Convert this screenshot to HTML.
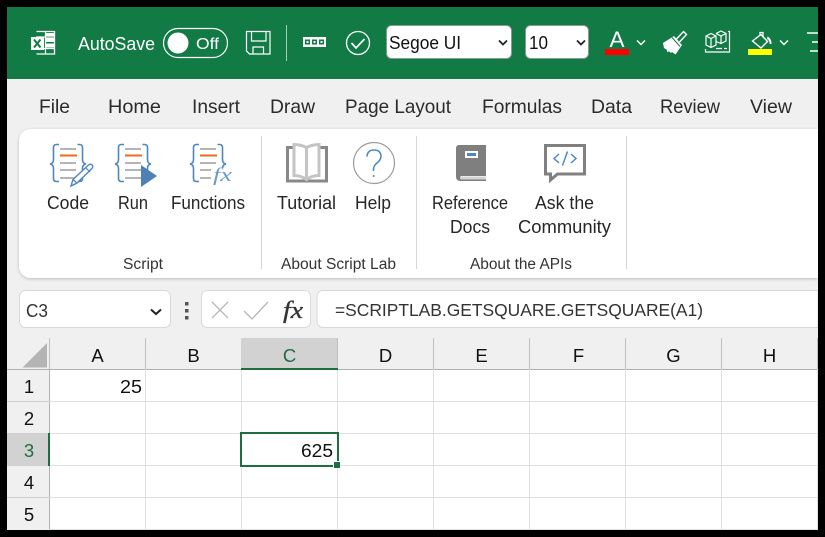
<!DOCTYPE html>
<html><head><meta charset="utf-8"><style>
html,body{margin:0;padding:0;background:#000;width:825px;height:537px;overflow:hidden}
svg{display:block}
text{font-family:"Liberation Sans",sans-serif;fill:#262626;font-size:18px}
.w{fill:#fff}
.tab{font-size:19.500px;fill:#2b2b2b}
.l{font-size:18.500px}
.g{font-size:15.500px;fill:#333}
.c{font-size:18.500px;fill:#111;text-anchor:middle}
.n{font-size:18.500px;fill:#111}
</style></head><body>
<svg width="825" height="537" viewBox="0 0 825 537" xmlns="http://www.w3.org/2000/svg">
<defs>
<filter id="sh" x="-5%" y="-10%" width="110%" height="120%"><feDropShadow dx="0" dy="1" stdDeviation="1.500" flood-color="#000" flood-opacity=".22"/></filter>
<g id="doc">
<path d="M59 144.500h-2.500q-3 0-3 3v12q0 4-3.500 4.500q3.500.5 3.500 4.500v10q0 3 3 3h2.500M77.500 144.500h2q3 0 3 3v12q0 4 3.500 4.500q-3.500.5-3.500 4.500v10q0 3-3 3h-2" fill="none" stroke="#4e86bd" stroke-width="1.600"/>
<path d="M60 149h16M60 163h16M60 170h16M60 178h16" stroke="#b5b5b5" stroke-width="2"/>
<path d="M60 155.500h17" stroke="#ed6a1f" stroke-width="2"/>
</g>
</defs>
<rect x="7" y="7" width="811" height="523" fill="#f0f0f0"/>
<rect x="7" y="7" width="811" height="72" fill="#127a45"/>

<!-- excel logo -->
<path d="M36.500 31.500h18v22.500h-18" fill="none" stroke="#fff" stroke-width="1.300"/>
<path d="M36 37h19M36 48.500h19M45.500 31v23" stroke="#fff" stroke-width="1.200"/>
<rect x="31" y="37" width="13" height="13" fill="#fff"/>
<path d="M34 39.500l6.500 8M40.500 39.500l-6.500 8" stroke="#127a45" stroke-width="2"/>
<path d="M46 38h8v4h-8zM46 43.500h8v4h-8zM46 33h8v3h-8z" fill="#fff"/>

<text x="78" y="50" class="w" style="font-size:18px" textLength="77" lengthAdjust="spacingAndGlyphs">AutoSave</text>
<rect x="163.500" y="28.500" width="64" height="29" rx="14.500" fill="none" stroke="#fff" stroke-width="1.200"/>
<circle cx="178" cy="43" r="10.500" fill="#fff"/>
<text x="196" y="49" class="w" style="font-size:16px" textLength="23" lengthAdjust="spacingAndGlyphs">Off</text>

<!-- save -->
<path d="M246.500 31.500h23.500v22.500h-20.500l-3-3z" fill="none" stroke="#fff" stroke-width="1.200"/>
<path d="M251.500 31.500v9.500h14.500v-9.500M253 54v-7h10.500v7" fill="none" stroke="#fff" stroke-width="1.200"/>
<rect x="286" y="25" width="1" height="36" fill="#a9cdb9"/>
<!-- 000 -->
<rect x="303" y="37" width="23" height="10" fill="#fff"/>
<path d="M305 39.500h5v5h-5zM312 39.500h5v5h-5zM319 39.500h5v5h-5z" fill="#127a45"/>
<path d="M306.500 41h2v2h-2zM313.500 41h2v2h-2zM320.500 41h2v2h-2z" fill="#fff"/>
<!-- check -->
<circle cx="358" cy="43" r="11.500" fill="none" stroke="#fff" stroke-width="1.300"/>
<path d="M351.500 43l4.500 5 8.500-9" fill="none" stroke="#fff" stroke-width="1.700"/>

<!-- selects -->
<rect x="386.500" y="25.500" width="125" height="33" rx="5" fill="#fff" stroke="#8a9a90"/>
<text x="389" y="49" style="font-size:18.500px;fill:#111" textLength="72" lengthAdjust="spacingAndGlyphs">Segoe UI</text>
<path d="M499 40.500l4 4 4-4" fill="none" stroke="#222" stroke-width="1.800"/>
<rect x="525.500" y="25.500" width="63" height="33" rx="5" fill="#fff" stroke="#8a9a90"/>
<text x="529" y="49" style="font-size:18.500px;fill:#111" textLength="19" lengthAdjust="spacingAndGlyphs">10</text>
<path d="M577 40.500l4 4 4-4" fill="none" stroke="#222" stroke-width="1.800"/>

<!-- font colour -->
<text x="609.500" y="47" class="w" style="font-size:22px" textLength="15" lengthAdjust="spacingAndGlyphs">A</text>
<rect x="605" y="49" width="24" height="6" fill="#f00"/>
<path d="M637 40.500l4 4 4-4" fill="none" stroke="#fff" stroke-width="1.400"/>
<!-- brush -->
<path d="M663 43l11-7 8 9-6.500 9.500-3.500-2.500-1 1-2-1.800-1.500 1-1-2.700-2.500-1.500z" fill="#fff"/>
<path d="M672 37.500l8 9" stroke="#127a45" stroke-width="1"/>
<path d="M676.500 39l7-7.500 3 3-7 7.500" fill="none" stroke="#fff" stroke-width="1.400"/>
<!-- cubes -->
<g fill="none" stroke="#fff" stroke-width="1.200">
<path d="M706 36l5-2.500 5 2.500v9l-5 2.500-5-2.500zM706 36l5 2.500 5-2.500M711 38.500v9"/>
<path d="M716 33.500l5-2.500 5 2.500v7.500l-5 2.500-5-2M716 33.500l5 2.500 5-2.500M721 36v7"/>
<path d="M728 31.500h1.500v20.500h-24v-3M716 48.500h6M724 48.500h3" />
</g>
<!-- fill colour -->
<path d="M752.500 41l8.500-6.500 6.500 7-6.500 6.500z" fill="none" stroke="#fff" stroke-width="1.400"/>
<path d="M760 36v-3.500h3v5" fill="none" stroke="#fff" stroke-width="1.300"/>
<path d="M767.500 36.500q4 1.500 4 7.500h-1.800q0-3.500-2.700-5z" fill="#fff"/>
<rect x="748" y="49" width="24" height="6" fill="#ff0"/>
<path d="M780 40.500l4 4 4-4" fill="none" stroke="#fff" stroke-width="1.400"/>
<!-- align -->
<path d="M807 33h11M812 42h6M810 51h8" stroke="#fff" stroke-width="1.400"/>

<!-- tabs -->
<text x="39" y="113" class="tab" textLength="31" lengthAdjust="spacingAndGlyphs">File</text>
<text x="108" y="113" class="tab" textLength="53" lengthAdjust="spacingAndGlyphs">Home</text>
<text x="192" y="113" class="tab" textLength="48" lengthAdjust="spacingAndGlyphs">Insert</text>
<text x="270" y="113" class="tab" textLength="45" lengthAdjust="spacingAndGlyphs">Draw</text>
<text x="345" y="113" class="tab" textLength="106" lengthAdjust="spacingAndGlyphs">Page Layout</text>
<text x="482" y="113" class="tab" textLength="80" lengthAdjust="spacingAndGlyphs">Formulas</text>
<text x="591" y="113" class="tab" textLength="41" lengthAdjust="spacingAndGlyphs">Data</text>
<text x="660" y="113" class="tab" textLength="60" lengthAdjust="spacingAndGlyphs">Review</text>
<text x="750" y="113" class="tab" textLength="42" lengthAdjust="spacingAndGlyphs">View</text>

<!-- ribbon -->
<path d="M818 129H31a12 12 0 0 0-12 12v125a12 12 0 0 0 12 12H818z" fill="#fff" filter="url(#sh)"/>
<path d="M261.500 136v133M416.500 136v133M626.500 136v133" stroke="#d6d6d6" stroke-width="1"/>

<!-- code -->
<use href="#doc"/>
<path d="M71 186l2-6.500 15.500-14.500q2-1.500 3.500 0t0 3.500l-15 14.500z" fill="#fff" stroke="#4e86bd" stroke-width="1.400"/>
<path d="M85.500 167.500l4.500 4.500M73 179.500l4 3.500" stroke="#4e86bd" stroke-width="1.200"/>
<!-- run -->
<use href="#doc" x="65"/>
<path d="M141 165l16 11-16 11z" fill="#4e80b5"/>
<!-- functions -->
<use href="#doc" x="140"/>
<rect x="211" y="168" width="22" height="18" fill="#fff"/>
<text x="213" y="181" style="font-family:'Liberation Serif',serif;font-style:italic;font-size:19px;fill:#6b9bcb" textLength="19" lengthAdjust="spacingAndGlyphs">fx</text>

<text x="47" y="209" class="l" textLength="42" lengthAdjust="spacingAndGlyphs">Code</text>
<text x="118" y="209" class="l" textLength="30" lengthAdjust="spacingAndGlyphs">Run</text>
<text x="171" y="209" class="l" textLength="74" lengthAdjust="spacingAndGlyphs">Functions</text>
<text x="123" y="269" class="g" textLength="40" lengthAdjust="spacingAndGlyphs">Script</text>

<!-- tutorial book -->
<path d="M287.500 147.500h39v33.500h-39z" fill="none" stroke="#888" stroke-width="3"/>
<path d="M306.500 147.500q-6-3-12.500-3v31q7 0 12.500 4q5.500-4 12.500-4v-31q-6.500 0-12.500 3zv32" fill="#fff" stroke="#c4c4c4" stroke-width="3"/>
<!-- help -->
<circle cx="374" cy="163" r="20.500" fill="#fff" stroke="#9a9a9a" stroke-width="1.200"/>
<path d="M367 156.500q.5-6.500 7-6.500t7 6q0 4-4 7t-3.500 8" fill="none" stroke="#4d8ac6" stroke-width="1.600"/>
<circle cx="373.700" cy="176" r="1" fill="#4d8ac6"/>
<text x="277" y="209" class="l" textLength="59" lengthAdjust="spacingAndGlyphs">Tutorial</text>
<text x="355" y="209" class="l" textLength="36" lengthAdjust="spacingAndGlyphs">Help</text>
<text x="281" y="269" class="g" textLength="115" lengthAdjust="spacingAndGlyphs">About Script Lab</text>

<!-- ref book -->
<path d="M456 148a3 3 0 0 1 3-3h27v31h-25a2.500 2.500 0 0 0 0 3.500h25v1.500h-26a4 4 0 0 1-4-4z" fill="#7f7f7f"/>
<rect x="461" y="176.500" width="25" height="3" fill="#d4d4d4"/>
<rect x="465" y="151" width="13" height="7" fill="#fff"/>
<rect x="467" y="153" width="9" height="3" fill="#4e86bd"/>
<!-- ask -->
<path d="M545.500 145.500h39v28.500h-27l-7 6v-6h-5z" fill="#fff" stroke="#808080" stroke-width="3"/>
<path d="M559 154l-5 4.500 5 4.500M571 154l5 4.500-5 4.500M567.500 151.500l-5 14" fill="none" stroke="#4d8ac6" stroke-width="1.500"/>

<text x="432" y="209" class="l" textLength="76" lengthAdjust="spacingAndGlyphs">Reference</text>
<text x="450" y="233" class="l" textLength="40" lengthAdjust="spacingAndGlyphs">Docs</text>
<text x="535" y="209" class="l" textLength="59" lengthAdjust="spacingAndGlyphs">Ask the</text>
<text x="518" y="233" class="l" textLength="93" lengthAdjust="spacingAndGlyphs">Community</text>
<text x="470" y="269" class="g" textLength="102" lengthAdjust="spacingAndGlyphs">About the APIs</text>

<!-- formula bar -->
<rect x="19.500" y="290.500" width="151" height="37" rx="6" fill="#fff" stroke="#d8d8d8"/>
<text x="26" y="317" style="font-size:18px;fill:#333" textLength="22" lengthAdjust="spacingAndGlyphs">C3</text>
<path d="M151 309.500l5 4.500 5-4.500" fill="none" stroke="#222" stroke-width="2"/>
<path d="M185 302h3.500v3.500h-3.500zM185 309h3.500v3.500h-3.500zM185 316h3.500v3.500h-3.500z" fill="#555"/>
<rect x="201.500" y="290.500" width="109" height="37" rx="6" fill="#fff" stroke="#d8d8d8"/>
<path d="M212 302l16 16M228 302l-16 16" stroke="#b8b8b8" stroke-width="1.300"/>
<path d="M244 311l8 8 16-17" fill="none" stroke="#b8b8b8" stroke-width="1.300"/>
<text x="283" y="318" style="font-family:'Liberation Serif',serif;font-style:italic;font-size:24px;fill:#333;stroke:#333;stroke-width:.35px" textLength="20" lengthAdjust="spacingAndGlyphs">fx</text>
<path d="M818 290.500H323a6 6 0 0 0-6 6v25a6 6 0 0 0 6 6H818z" fill="#fff" stroke="#d8d8d8"/>
<text x="335" y="316" style="font-size:17.300px;fill:#333" textLength="368" lengthAdjust="spacingAndGlyphs">=SCRIPTLAB.GETSQUARE.GETSQUARE(A1)</text>

<!-- grid -->
<rect x="49" y="369" width="769" height="161" fill="#fff"/>
<rect x="241" y="338" width="96" height="31" fill="#d2d2d2"/>
<rect x="7" y="433" width="42" height="33" fill="#d2d2d2"/>
<path d="M47 343v24.500H22.500z" fill="#b4b4b4"/>
<path d="M49.500 338v31M145.500 338v31M433.500 338v31M529.500 338v31M625.500 338v31M721.500 338v31M817.500 338v31M337.500 338v31" stroke="#c0c0c0"/>
<path d="M7 369.500h811" stroke="#b0b0b0"/>
<path d="M49.500 369v161" stroke="#b0b0b0"/>
<path d="M145.500 369v161M241.500 369v161M337.500 369v161M433.500 369v161M529.500 369v161M625.500 369v161M721.500 369v161M817.500 369v161" stroke="#e0e0e0"/>
<path d="M49 401.500h769M49 433.500h769M49 465.500h769M49 497.500h769M49 529.500h769" stroke="#e0e0e0"/>
<path d="M7 401.500h42M7 433.500h42M7 465.500h42M7 497.500h42" stroke="#cfcfcf"/>
<rect x="241" y="368" width="97" height="2" fill="#1d6f42"/>
<rect x="48" y="433" width="2" height="33" fill="#1d6f42"/>

<text x="97.500" y="362" class="c">A</text>
<text x="193.500" y="362" class="c">B</text>
<text x="289.500" y="362" class="c" style="fill:#1d6f42">C</text>
<text x="385.500" y="362" class="c">D</text>
<text x="481.500" y="362" class="c">E</text>
<text x="578.500" y="362" class="c">F</text>
<text x="673.500" y="362" class="c">G</text>
<text x="769.500" y="362" class="c">H</text>
<text x="29" y="393" class="c">1</text>
<text x="29" y="425" class="c">2</text>
<text x="29" y="457" class="c" style="fill:#1d6f42">3</text>
<text x="29" y="489" class="c">4</text>
<text x="29" y="521" class="c">5</text>
<text x="120" y="393" class="n" textLength="22" lengthAdjust="spacingAndGlyphs">25</text>
<text x="301" y="457" class="n" textLength="32" lengthAdjust="spacingAndGlyphs">625</text>

<rect x="241" y="433" width="97" height="33" fill="none" stroke="#1d6f42" stroke-width="2"/>
<rect x="333" y="461" width="7" height="7" fill="#fff"/>
<rect x="334" y="462" width="6" height="6" fill="#1d6f42"/>

<!-- outer black frame -->
<path d="M0 0h825v537H0zM7 7v523h811V7z" fill="#000" fill-rule="evenodd"/>
</svg>
</body></html>
